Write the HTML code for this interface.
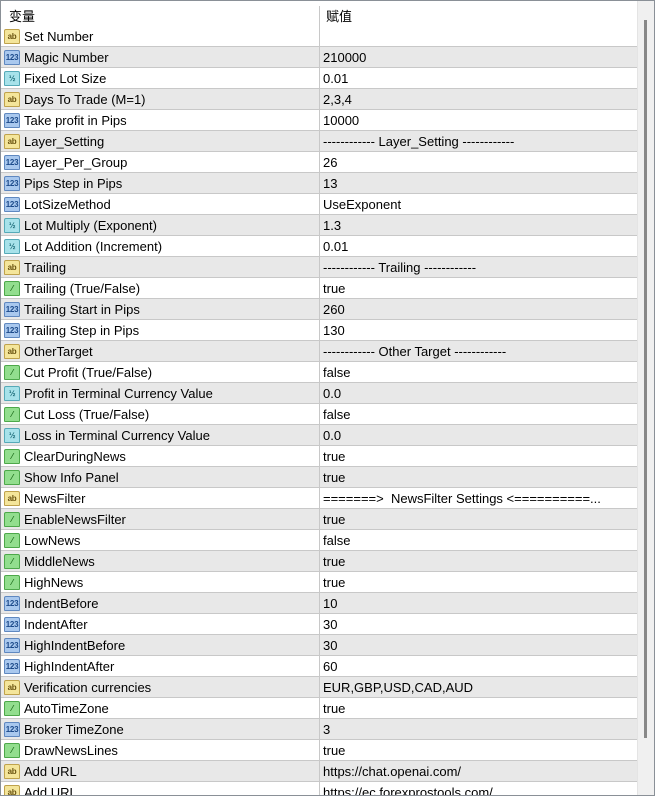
<!DOCTYPE html>
<html><head><meta charset="utf-8"><style>
*{margin:0;padding:0;box-sizing:border-box}
body{width:655px;height:796px;overflow:hidden;background:#fff;font-family:"Liberation Sans","Noto Sans CJK SC",sans-serif;font-size:13px;color:#000}
#win{position:absolute;left:0;top:0;width:655px;height:796px;border:1px solid #8a9097;overflow:hidden}
#hdr{position:absolute;left:0;top:0;width:636px;height:25px;background:#fff}
#hdr span{position:absolute;top:5px;font-size:13px}
#vline{position:absolute;left:318px;top:5px;width:1px;height:800px;background:#c8c8c8}
#rows{position:absolute;left:0;top:25px;width:636px}
.r{height:21px;border-bottom:1px solid #c8c8c8;position:relative;white-space:nowrap}
.r:nth-child(even){background:#e8e8e8}
.n{position:absolute;left:23px;top:3px}
.v{position:absolute;left:322px;top:3px}
.i{position:absolute;left:3px;top:3px;width:16px;height:15px;border:1px solid;border-radius:2px 2px 1px 1px;font-size:8px;font-weight:bold;font-style:normal;text-align:center;line-height:13px;font-family:"Liberation Sans",sans-serif;letter-spacing:-0.3px}
.a{background:#f4e59a;border-color:#bfa24c;color:#6a5310}
.b{background:#a9c8ee;border-color:#5f88c0;color:#1c4a8a}
.h{background:#a7e2ea;border-color:#56aab8;color:#1b6b78}
.g{background:#92de8e;border-color:#4da84a;color:#1e6d1c}
#sb{position:absolute;left:636px;top:0;width:17px;height:794px;background:#f0f0f0;border-left:1px solid #e4e4e4}
#th{position:absolute;left:6px;top:19px;width:3px;height:718px;background:#888}
</style></head><body><div id="win">
<div id="hdr"><span style="left:8px">变量</span><span style="left:325px">赋值</span></div>
<div id="rows">
<div class="r"><i class="i a">ab</i><span class="n">Set Number</span></div>
<div class="r"><i class="i b">123</i><span class="n">Magic Number</span><span class="v">210000</span></div>
<div class="r"><i class="i h">½</i><span class="n">Fixed Lot Size</span><span class="v">0.01</span></div>
<div class="r"><i class="i a">ab</i><span class="n">Days To Trade (M=1)</span><span class="v">2,3,4</span></div>
<div class="r"><i class="i b">123</i><span class="n">Take profit in Pips</span><span class="v">10000</span></div>
<div class="r"><i class="i a">ab</i><span class="n">Layer_Setting</span><span class="v">------------ Layer_Setting ------------</span></div>
<div class="r"><i class="i b">123</i><span class="n">Layer_Per_Group</span><span class="v">26</span></div>
<div class="r"><i class="i b">123</i><span class="n">Pips Step in Pips</span><span class="v">13</span></div>
<div class="r"><i class="i b">123</i><span class="n">LotSizeMethod</span><span class="v">UseExponent</span></div>
<div class="r"><i class="i h">½</i><span class="n">Lot Multiply (Exponent)</span><span class="v">1.3</span></div>
<div class="r"><i class="i h">½</i><span class="n">Lot Addition (Increment)</span><span class="v">0.01</span></div>
<div class="r"><i class="i a">ab</i><span class="n">Trailing</span><span class="v">------------ Trailing ------------</span></div>
<div class="r"><i class="i g">⁄</i><span class="n">Trailing (True/False)</span><span class="v">true</span></div>
<div class="r"><i class="i b">123</i><span class="n">Trailing Start in Pips</span><span class="v">260</span></div>
<div class="r"><i class="i b">123</i><span class="n">Trailing Step in Pips</span><span class="v">130</span></div>
<div class="r"><i class="i a">ab</i><span class="n">OtherTarget</span><span class="v">------------ Other Target ------------</span></div>
<div class="r"><i class="i g">⁄</i><span class="n">Cut Profit (True/False)</span><span class="v">false</span></div>
<div class="r"><i class="i h">½</i><span class="n">Profit in Terminal Currency Value</span><span class="v">0.0</span></div>
<div class="r"><i class="i g">⁄</i><span class="n">Cut Loss (True/False)</span><span class="v">false</span></div>
<div class="r"><i class="i h">½</i><span class="n">Loss in Terminal Currency Value</span><span class="v">0.0</span></div>
<div class="r"><i class="i g">⁄</i><span class="n">ClearDuringNews</span><span class="v">true</span></div>
<div class="r"><i class="i g">⁄</i><span class="n">Show Info Panel</span><span class="v">true</span></div>
<div class="r"><i class="i a">ab</i><span class="n">NewsFilter</span><span class="v">=======&gt;&nbsp; NewsFilter Settings &lt;==========...</span></div>
<div class="r"><i class="i g">⁄</i><span class="n">EnableNewsFilter</span><span class="v">true</span></div>
<div class="r"><i class="i g">⁄</i><span class="n">LowNews</span><span class="v">false</span></div>
<div class="r"><i class="i g">⁄</i><span class="n">MiddleNews</span><span class="v">true</span></div>
<div class="r"><i class="i g">⁄</i><span class="n">HighNews</span><span class="v">true</span></div>
<div class="r"><i class="i b">123</i><span class="n">IndentBefore</span><span class="v">10</span></div>
<div class="r"><i class="i b">123</i><span class="n">IndentAfter</span><span class="v">30</span></div>
<div class="r"><i class="i b">123</i><span class="n">HighIndentBefore</span><span class="v">30</span></div>
<div class="r"><i class="i b">123</i><span class="n">HighIndentAfter</span><span class="v">60</span></div>
<div class="r"><i class="i a">ab</i><span class="n">Verification currencies</span><span class="v">EUR,GBP,USD,CAD,AUD</span></div>
<div class="r"><i class="i g">⁄</i><span class="n">AutoTimeZone</span><span class="v">true</span></div>
<div class="r"><i class="i b">123</i><span class="n">Broker TimeZone</span><span class="v">3</span></div>
<div class="r"><i class="i g">⁄</i><span class="n">DrawNewsLines</span><span class="v">true</span></div>
<div class="r"><i class="i a">ab</i><span class="n">Add URL</span><span class="v">https://chat.openai.com/</span></div>
<div class="r"><i class="i a">ab</i><span class="n">Add URL</span><span class="v">https://ec.forexprostools.com/</span></div>
</div>
<div id="vline"></div>
<div id="sb"><div id="th"></div></div>
</div></body></html>
